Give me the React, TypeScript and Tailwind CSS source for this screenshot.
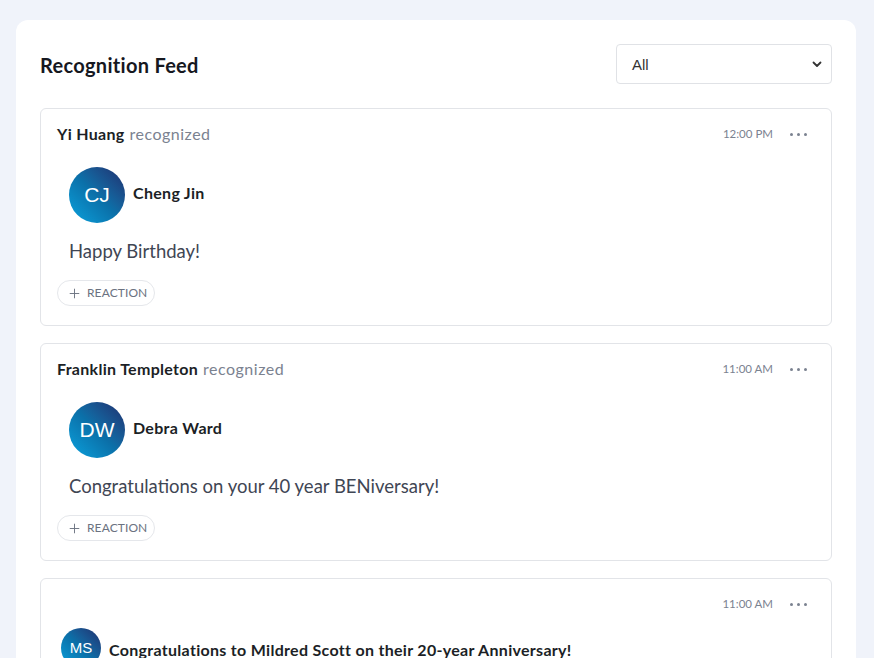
import React from 'react';
import { Plus } from 'lucide-react';

type Post = {
  from?: string;
  to: string;
  initials: string;
  time: string;
  message?: string;
  compact?: boolean;
};

const posts: Post[] = [
  { from: 'Yi Huang', to: 'Cheng Jin', initials: 'CJ', time: '12:00 PM', message: 'Happy Birthday!' },
  {
    from: 'Franklin Templeton',
    to: 'Debra Ward',
    initials: 'DW',
    time: '11:00 AM',
    message: 'Congratulations on your 40 year BENiversary!',
  },
  {
    to: 'Congratulations to Mildred Scott on their 20-year Anniversary!',
    initials: 'MS',
    time: '11:00 AM',
    compact: true,
  },
];

const Dots = () => (
  <div className="flex items-center gap-[4px] ml-4">
    <span className="w-[3px] h-[3px] rounded-full bg-[#7b8290]" />
    <span className="w-[3px] h-[3px] rounded-full bg-[#7b8290]" />
    <span className="w-[3px] h-[3px] rounded-full bg-[#7b8290]" />
  </div>
);

const Avatar = ({ initials, small }: { initials: string; small?: boolean }) => (
  <div
    className={
      small
        ? 'w-10 h-10 rounded-full shrink-0 flex items-center justify-center text-white text-[15px] bg-gradient-to-tr from-[#0aa3de] via-[#0b6fa8] to-[#1c2f6e] font-["Liberation_Sans",sans-serif]'
        : 'w-14 h-14 rounded-full shrink-0 flex items-center justify-center text-white text-[21px] bg-gradient-to-tr from-[#0aa3de] via-[#0b6fa8] to-[#1c2f6e] font-["Liberation_Sans",sans-serif]'
    }
  >
    {initials}
  </div>
);

const PostCard = ({ post }: { post: Post }) => (
  <div className="border border-[#e2e4e8] rounded-md px-4 pt-4 pb-[19px]">
    <div className="flex items-center justify-between h-[18px] pr-2">
      <div className="flex items-baseline gap-[5px] text-[16px]">
        {post.from && <span className="font-bold tracking-[0.3px] text-[#1c1f26]">{post.from}</span>}
        {post.from && <span className="tracking-[0.5px] text-[#7b8290]">recognized</span>}
      </div>
      <div className="flex items-center">
        <span className="text-[11.5px] text-[#7b8290] mr-[1px]">{post.time}</span>
        <Dots />
      </div>
    </div>

    {post.compact ? (
      <div className="flex items-center gap-2 mt-[15px] pl-1">
        <Avatar initials={post.initials} small />
        <span className="font-bold text-[16px] tracking-[0.3px] text-[#1c1f26] mt-[4px]">{post.to}</span>
      </div>
    ) : (
      <>
        <div className="flex items-center gap-2 mt-6 pl-3">
          <Avatar initials={post.initials} />
          <span className="font-bold text-[16px] tracking-[0.3px] text-[#1c1f26] -mt-[5px]">{post.to}</span>
        </div>
        <p className="mt-4 pl-3 text-[18.5px] leading-6 text-[#3f4654]">{post.message}</p>
        <button className="mt-[17px] h-[26px] pl-[9px] pr-[7px] flex items-center gap-[5px] rounded-full border border-[#e5e7eb] text-[12px] tracking-[0.1px] text-[#6b7280]">
          <Plus className="w-[15px] h-[15px]" strokeWidth={1.5} />
          REACTION
        </button>
      </>
    )}
  </div>
);

export default function App() {
  return (
    <div className="min-h-screen bg-[#f0f3fa] pl-4 pr-[18px] pt-5 font-['Lato',sans-serif]">
      <div className="bg-white rounded-xl px-6 pt-6 pb-6">
        <div className="flex items-center justify-between h-10 mb-6">
          <h1 className="text-[20px] font-bold tracking-[0.3px] text-[#16181f] mt-[2px]">Recognition Feed</h1>
          <div className="w-[216px] h-10 border border-[#e0e2e6] rounded flex items-center justify-between pl-[15px] pr-2 font-['Liberation_Sans',sans-serif] text-[15px] text-[#333]">
            <span className="mt-[2px]">All</span>
            <svg width="12" height="12" viewBox="0 0 12 12" fill="none">
              <path d="M2.5 4.5 6 8l3.5-3.5" stroke="#333" strokeWidth="1.8" strokeLinecap="round" strokeLinejoin="round" />
            </svg>
          </div>
        </div>
        <div className="flex flex-col gap-[17px]">
          {posts.map((p, i) => (
            <PostCard key={i} post={p} />
          ))}
        </div>
      </div>
    </div>
  );
}
